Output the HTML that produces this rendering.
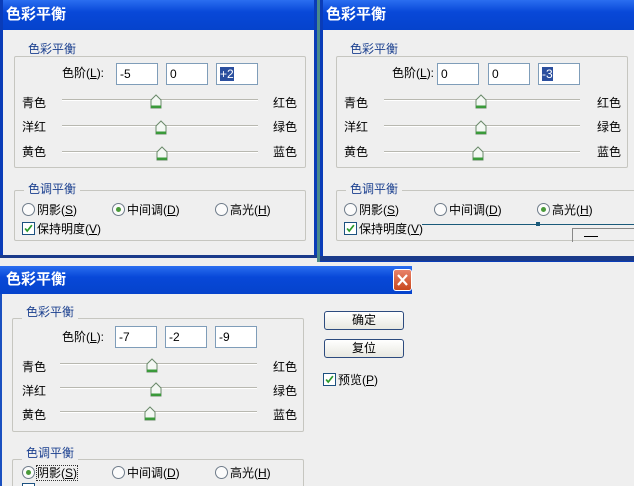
<!DOCTYPE html>
<html style="width:634px;height:486px;overflow:hidden"><head><meta charset="utf-8"><style>
*{margin:0;padding:0;box-sizing:border-box}
body{width:634px;height:486px;overflow:hidden;background:#efefef;position:relative;font-family:"Liberation Sans","Noto Sans CJK SC",sans-serif;font-size:12px;color:#000}
.a{position:absolute;white-space:nowrap;line-height:14px}
.dlg{position:absolute;background:#efefef;overflow:hidden}
.title{position:absolute;left:0;top:0;right:0;height:30px;background:linear-gradient(#2a6ef0,#0848d8 40%,#0543cc);color:#fff;font-weight:bold;font-size:15px;line-height:30px;padding-left:6px}
.grp{position:absolute;border:1px solid #c6c6c0;border-radius:2px}
.gl{position:absolute;background:#efefef;color:#1a3f8f;padding:0 4px;line-height:14px}
.in{position:absolute;width:42px;height:22px;background:#fff;border:1px solid #7f9db9;padding:2px 3px;line-height:16px;font-size:12px}
.sel{background:#2b4f9e;color:#fff}
.track{position:absolute;height:2px;border-top:1px solid #b8b8b0;border-bottom:1px solid #fff}
.th{position:absolute;width:12px;height:15px}
.rad{position:absolute;width:13px;height:13px;border:1px solid #6f7c8a;border-radius:50%;background:#fbfbfb}
.rad.on::after{content:"";position:absolute;left:3px;top:3px;width:5px;height:5px;border-radius:50%;background:#4a9a3a}
.cb{position:absolute;width:13px;height:13px;border:1px solid #1c5180;background:#fff}
.btn{position:absolute;width:80px;height:19px;border:1px solid #2d4b7e;border-radius:3px;background:linear-gradient(#fff,#e8e8e0);text-align:center;line-height:17px}
</style></head><body>
<svg width="0" height="0" style="position:absolute"><defs>
<symbol id="t" viewBox="0 0 12 15"><path d="M1 14V6L6 1L11 6V14Z" fill="#f4f8f4" stroke="#6a8a6a"/><rect x="1" y="11.5" width="10" height="2.5" fill="#3a9a3a"/></symbol>
<symbol id="ck" viewBox="0 0 13 13"><path d="M2.5 6.5L5 9.5L10.5 2.5" fill="none" stroke="#2a9a2a" stroke-width="2"/></symbol>
</defs></svg>

<div class="dlg" style="left:0;top:0;width:317px;height:258px;border:3px solid #0a3cb8;border-top:0">
<div class="title" style="left:-3px">色彩平衡</div>
</div>
<div style="position:absolute;left:0;top:0;width:317px;height:258px">
<div class="grp" style="left:14px;top:56px;width:292px;height:112px"></div>
<div class="gl a" style="left:24px;top:42px">色彩平衡</div>
<div class="a" style="left:62px;top:66px">色阶(<u>L</u>):</div>
<div class="in" style="left:116px;top:63px">-5</div>
<div class="in" style="left:166px;top:63px">0</div>
<div class="in" style="left:216px;top:63px"><span class="sel">+2</span></div>
<div class="a" style="left:22px;top:96px">青色</div><div class="track" style="left:62px;width:196px;top:99px"></div><svg class="th" style="left:150px;top:94px"><use href="#t"/></svg><div class="a" style="left:273px;top:96px">红色</div>
<div class="a" style="left:22px;top:120px">洋红</div><div class="track" style="left:62px;width:196px;top:125px"></div><svg class="th" style="left:155px;top:120px"><use href="#t"/></svg><div class="a" style="left:273px;top:120px">绿色</div>
<div class="a" style="left:22px;top:145px">黄色</div><div class="track" style="left:62px;width:196px;top:151px"></div><svg class="th" style="left:156px;top:146px"><use href="#t"/></svg><div class="a" style="left:273px;top:145px">蓝色</div>
<div class="grp" style="left:14px;top:190px;width:292px;height:51px"></div>
<div class="gl a" style="left:24px;top:182px">色调平衡</div>
<div class="rad" style="left:22px;top:203px"></div><div class="a" style="left:37px;top:203px">阴影(<u>S</u>)</div>
<div class="rad on" style="left:112px;top:203px"></div><div class="a" style="left:127px;top:203px">中间调(<u>D</u>)</div>
<div class="rad" style="left:215px;top:203px"></div><div class="a" style="left:230px;top:203px">高光(<u>H</u>)</div>
<svg class="cb" style="left:22px;top:222px"><use href="#ck"/></svg><div class="a" style="left:37px;top:222px">保持明度(<u>V</u>)</div>
</div>

<div style="position:absolute;left:317px;top:0;width:4px;height:262px;background:#4a8a8a"></div>

<div class="dlg" style="left:320px;top:0;width:314px;height:262px;border:3px solid #0a3cb8;border-top:0;border-right:0">
<div class="title" style="left:-3px">色彩平衡</div>
</div>
<div style="position:absolute;left:322px;top:0;width:312px;height:262px;overflow:hidden">
<div class="grp" style="left:14px;top:56px;width:292px;height:112px"></div>
<div class="gl a" style="left:24px;top:42px">色彩平衡</div>
<div class="a" style="left:70px;top:66px">色阶(<u>L</u>):</div>
<div class="in" style="left:115px;top:63px">0</div>
<div class="in" style="left:166px;top:63px">0</div>
<div class="in" style="left:216px;top:63px"><span class="sel">-3</span></div>
<div class="a" style="left:22px;top:96px">青色</div><div class="track" style="left:62px;width:196px;top:99px"></div><svg class="th" style="left:153px;top:94px"><use href="#t"/></svg><div class="a" style="left:275px;top:96px">红色</div>
<div class="a" style="left:22px;top:120px">洋红</div><div class="track" style="left:62px;width:196px;top:125px"></div><svg class="th" style="left:153px;top:120px"><use href="#t"/></svg><div class="a" style="left:275px;top:120px">绿色</div>
<div class="a" style="left:22px;top:145px">黄色</div><div class="track" style="left:62px;width:196px;top:151px"></div><svg class="th" style="left:150px;top:146px"><use href="#t"/></svg><div class="a" style="left:275px;top:145px">蓝色</div>
<div class="grp" style="left:14px;top:190px;width:300px;height:51px"></div>
<div class="gl a" style="left:24px;top:182px">色调平衡</div>
<div class="rad" style="left:22px;top:203px"></div><div class="a" style="left:37px;top:203px">阴影(<u>S</u>)</div>
<div class="rad" style="left:112px;top:203px"></div><div class="a" style="left:127px;top:203px">中间调(<u>D</u>)</div>
<div class="rad on" style="left:215px;top:203px"></div><div class="a" style="left:230px;top:203px">高光(<u>H</u>)</div>
<svg class="cb" style="left:22px;top:222px"><use href="#ck"/></svg><div class="a" style="left:37px;top:222px">保持明度(<u>V</u>)</div>
<div style="position:absolute;left:100px;top:224px;width:212px;height:1px;background:#1a5a7a"></div>
<div style="position:absolute;left:214px;top:222px;width:4px;height:4px;background:#1a5a7a"></div>
<div style="position:absolute;left:250px;top:228px;width:62px;height:14px;border:1px solid #888;border-right:0;border-bottom:0"></div>
<div style="position:absolute;left:262px;top:236px;width:14px;height:1px;background:#000"></div>
</div>

<div style="position:absolute;left:0;top:262px;width:634px;height:224px;background:#efefef"></div>
<div style="position:absolute;left:320px;top:256px;width:314px;height:5px;background:#1a3a8a"></div>
<div style="position:absolute;left:0;top:255px;width:317px;height:3px;background:#1a3a8a"></div>
<div style="position:absolute;left:0;top:266px;width:412px;height:28px;background:linear-gradient(#2a6ef0,#0848d8 40%,#0543cc);color:#fff;font-weight:bold;font-size:15px;line-height:28px;padding-left:6px">色彩平衡</div>
<div style="position:absolute;left:393px;top:269px;width:19px;height:22px;background:linear-gradient(#e8826a,#c8481e);border:1px solid #fff;border-radius:3px"><svg width="17" height="20"><path d="M4 5L13 15M13 5L4 15" stroke="#fff" stroke-width="2.2"/></svg></div>
<div style="position:absolute;left:0;top:294px;width:2px;height:192px;background:#1a50c0"></div>
<div style="position:absolute;left:0;top:266px;width:412px;height:220px;overflow:hidden">
<div class="grp" style="left:12px;top:52px;width:292px;height:114px"></div>
<div class="gl a" style="left:22px;top:39px">色彩平衡</div>
<div class="a" style="left:62px;top:64px">色阶(<u>L</u>):</div>
<div class="in" style="left:115px;top:60px">-7</div>
<div class="in" style="left:165px;top:60px">-2</div>
<div class="in" style="left:215px;top:60px">-9</div>
<div class="a" style="left:22px;top:94px">青色</div><div class="track" style="left:60px;width:197px;top:97px"></div><svg class="th" style="left:146px;top:92px"><use href="#t"/></svg><div class="a" style="left:273px;top:94px">红色</div>
<div class="a" style="left:22px;top:118px">洋红</div><div class="track" style="left:60px;width:197px;top:121px"></div><svg class="th" style="left:150px;top:116px"><use href="#t"/></svg><div class="a" style="left:273px;top:118px">绿色</div>
<div class="a" style="left:22px;top:142px">黄色</div><div class="track" style="left:60px;width:197px;top:145px"></div><svg class="th" style="left:144px;top:140px"><use href="#t"/></svg><div class="a" style="left:273px;top:142px">蓝色</div>
<div class="grp" style="left:12px;top:193px;width:292px;height:60px"></div>
<div class="gl a" style="left:22px;top:180px">色调平衡</div>
<div class="rad on" style="left:22px;top:200px"></div><div class="a" style="left:37px;top:200px;outline:1px dotted #333">阴影(<u>S</u>)</div>
<div class="rad" style="left:112px;top:200px"></div><div class="a" style="left:127px;top:200px">中间调(<u>D</u>)</div>
<div class="rad" style="left:215px;top:200px"></div><div class="a" style="left:230px;top:200px">高光(<u>H</u>)</div>
<div class="cb" style="left:22px;top:217px"></div>
<div class="btn" style="left:324px;top:45px">确定</div>
<div class="btn" style="left:324px;top:73px">复位</div>
<svg class="cb" style="left:323px;top:107px"><use href="#ck"/></svg><div class="a" style="left:338px;top:107px">预览(<u>P</u>)</div>
</div>
</body></html>
